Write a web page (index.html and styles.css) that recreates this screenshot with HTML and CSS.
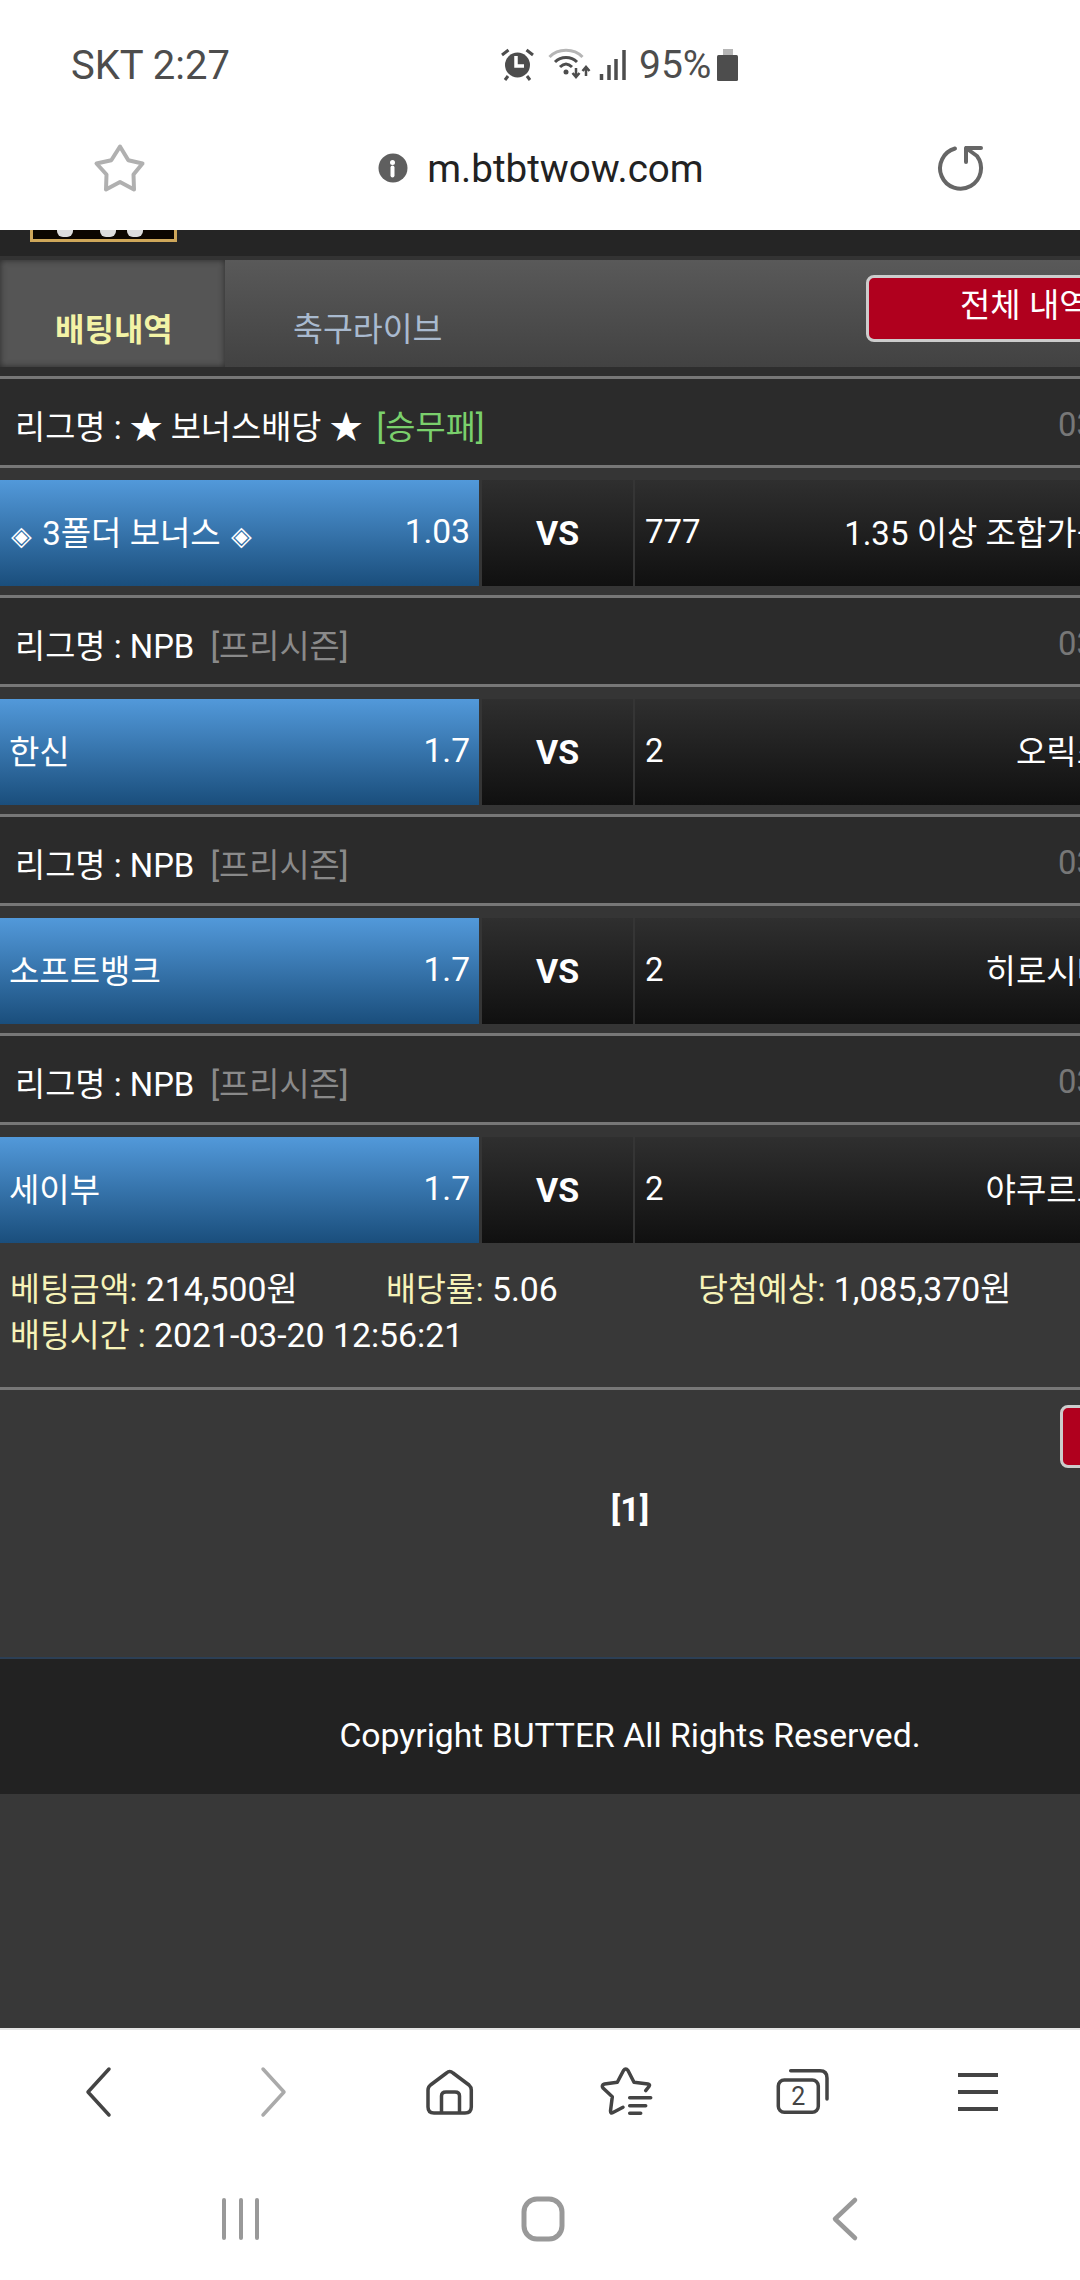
FILE: index.html
```html
<!DOCTYPE html>
<html>
<head lang="ko">
    <meta charset="UTF-8">
    <title>배팅내역</title>
    <link rel="stylesheet" href="styles.css">
</head>
<body>
<div class="phone">
    <div class="status">
        <span class="status-left">SKT 2:27</span>
        <div class="status-right">
            <svg class="ic-alarm" viewBox="0 0 34 32"><circle cx="16.500" cy="16" r="12.500" fill="#4d4d4d"/><path d="M1 6l6.500-5M32 6l-6.500-5M7 27l-3 4M26 27l3 4" stroke="#4d4d4d" stroke-width="3" fill="none"/><path d="M15 7v10h8" stroke="#fff" stroke-width="3.500" fill="none"/></svg>
            <svg class="ic-wifi" viewBox="0 0 43 32"><path d="M2.500 8C11 -1 27 -1 35.500 8" stroke="#b5b5b5" stroke-width="3" fill="none"/><path d="M8 13C14 7 24 7 30 13M13 18C17 14 21 14 25 18" stroke="#4d4d4d" stroke-width="3" fill="none"/><circle cx="19" cy="23" r="2.500" fill="#4d4d4d"/><path d="M29 19v9M25.500 24l3.500 4 3.500-4M39 27V18M35.500 22l3.500-4 3.500 4" stroke="#4d4d4d" stroke-width="2.500" fill="none"/></svg>
            <svg class="ic-signal" viewBox="0 0 27 30"><path d="M2.500 30v-6M10 30V15M17 30V9M25 30V0" stroke="#4d4d4d" stroke-width="3.500" fill="none"/></svg>
            <span class="status-pct">95%</span>
            <svg class="ic-batt" viewBox="0 0 21 32"><rect x="6" y="0" width="10" height="6" fill="#b5b5b5"/><rect x="0" y="6" width="21" height="26" rx="1.500" fill="#4d4d4d"/></svg>
        </div>
    </div>

    <div class="address">
        <svg class="ic-star" viewBox="0 0 51 49"><path d="M25 2.500l8.300 13.800 14.200 3.200-9 11 .5 15-14-7.500-14 7.500.5-15-10-11 14.800-3.200z" fill="none" stroke="#b0b0b0" stroke-width="4" stroke-linejoin="round"/></svg>
        <div class="url">
            <svg class="ic-info" viewBox="0 0 30 30"><circle cx="15" cy="15" r="14.500" fill="#5f5f5f"/><path d="M14.500 14.500v8" stroke="#fff" stroke-width="4" stroke-linecap="round"/><circle cx="14.500" cy="9.500" r="2.500" fill="#fff"/></svg>
            <span>m.btbtwow.com</span>
        </div>
        <svg class="ic-reload" viewBox="0 0 47 46"><path d="M19 3.500A20.500 20.500 0 1 0 41 11L30 3M30 3h15M30 3v14" fill="none" stroke="#666" stroke-width="4" stroke-linecap="round" stroke-linejoin="round"/></svg>
    </div>

    <div class="viewport">
        <div class="page">
            <div class="head">
                <div class="logo"><i></i><i></i><i></i></div>
            </div>
            <div class="tabs">
                <div class="tab on">배팅내역</div>
                <div class="tab">축구라이브</div>
                <a class="btn-all">전체 내역 삭제</a>
            </div>

            <div class="league">
                <div class="league-name">리그명 : ★ 보너스배당 ★ <span class="green">[승무패]</span></div>
                <div class="league-date">03-20 17:00</div>
            </div>
            <div class="match">
                <div class="home"><span><small>◈</small> 3폴더 보너스 <small>◈</small></span><span class="odds">1.03</span></div>
                <div class="vs">VS</div>
                <div class="away"><span>777</span><span>1.35 이상 조합가능</span></div>
            </div>

            <div class="league">
                <div class="league-name">리그명 : NPB <span class="gray">[프리시즌]</span></div>
                <div class="league-date">03-20 13:00</div>
            </div>
            <div class="match">
                <div class="home"><span>한신</span><span class="odds">1.7</span></div>
                <div class="vs">VS</div>
                <div class="away"><span>2</span><span>오릭스</span></div>
            </div>

            <div class="league">
                <div class="league-name">리그명 : NPB <span class="gray">[프리시즌]</span></div>
                <div class="league-date">03-20 13:00</div>
            </div>
            <div class="match">
                <div class="home"><span>소프트뱅크</span><span class="odds">1.7</span></div>
                <div class="vs">VS</div>
                <div class="away"><span>2</span><span>히로시마</span></div>
            </div>

            <div class="league">
                <div class="league-name">리그명 : NPB <span class="gray">[프리시즌]</span></div>
                <div class="league-date">03-20 13:00</div>
            </div>
            <div class="match last">
                <div class="home"><span>세이부</span><span class="odds">1.7</span></div>
                <div class="vs">VS</div>
                <div class="away"><span>2</span><span>야쿠르트</span></div>
            </div>

            <div class="info">
                <div><b>베팅금액:</b> 214,500원</div>
                <div><b>배당률:</b> 5.06</div>
                <div><b>당첨예상:</b> 1,085,370원</div>
                <div class="info-time"><b>배팅시간 :</b> 2021-03-20 12:56:21</div>
            </div>

            <div class="actions"><a class="btn-del">삭제</a></div>
            <div class="pager">[1]</div>

            <div class="footer">Copyright BUTTER All Rights Reserved.</div>
        </div>
    </div>

    <div class="toolbar">
        <div class="tool"><svg class="ic-nav" viewBox="0 0 50 50"><path d="M36 2L15 25l21 23" fill="none" stroke="#444" stroke-width="3.500" stroke-linecap="round" stroke-linejoin="round"/></svg></div>
        <div class="tool"><svg class="ic-nav" viewBox="0 0 50 50"><path d="M14 2l21 23-21 23" fill="none" stroke="#aaa" stroke-width="3.500" stroke-linecap="round" stroke-linejoin="round"/></svg></div>
        <div class="tool"><svg class="ic-nav" viewBox="0 0 50 50"><path d="M21.500 6Q24.700 3 28 6L44 18Q46.300 20 46.300 23V40Q46.300 46 40 46H9Q3 46 3 40V23Q3 20 5.500 18Z" fill="none" stroke="#444" stroke-width="3.500" stroke-linejoin="round"/><path d="M16.500 46V29Q16.500 25 21 25H30Q34.500 25 34.500 29V46" fill="none" stroke="#444" stroke-width="3.500"/></svg></div>
        <div class="tool"><svg class="ic-nav" viewBox="0 0 50 50"><path d="M44.700 23.700L48 19.500Q49.500 17.500 47 17L33 15.300 27 3.500Q24.700 .5 22.500 3.500L16.300 15.300 3.500 17Q0 18 2 21L11.300 29.700 9.500 44Q9.500 47 12 45.500L22 40.300" fill="none" stroke="#444" stroke-width="3.500" stroke-linecap="round" stroke-linejoin="round"/><path d="M28.700 30.700h21M28.700 38.700h16M28.700 46.300h11" stroke="#444" stroke-width="3.500" stroke-linecap="round"/></svg></div>
        <div class="tool"><svg class="ic-nav" viewBox="0 0 50 50"><path d="M13.700 3.700H43Q50 3.700 50 11V32" fill="none" stroke="#444" stroke-width="3.500" stroke-linecap="round"/><rect x="1.300" y="13" width="40" height="32.300" rx="6" fill="none" stroke="#444" stroke-width="3.500"/><text class="tab-count" x="21.300" y="38" text-anchor="middle">2</text></svg></div>
        <div class="tool"><svg class="ic-nav" viewBox="0 0 50 50"><path d="M5 8h40M5 25h40M5 42h40" stroke="#444" stroke-width="4"/></svg></div>
    </div>

    <div class="sysbar">
        <div class="sys"><svg class="ic-sys" viewBox="0 0 50 50"><path d="M8 6v38M25 6v38M41 6v38" stroke="#999" stroke-width="4" stroke-linecap="round"/></svg></div>
        <div class="sys"><svg class="ic-sys" viewBox="0 0 50 50"><rect x="6" y="5" width="38" height="40" rx="13" fill="none" stroke="#999" stroke-width="5"/></svg></div>
        <div class="sys"><svg class="ic-sys" viewBox="0 0 50 50"><path d="M35 6L15 25l20 19" fill="none" stroke="#999" stroke-width="4.500" stroke-linecap="round" stroke-linejoin="round"/></svg></div>
    </div>
</div>
</body>
</html>
```

FILE: styles.css
```css
*{
    padding: 0;
    margin: 0;
    box-sizing: border-box;
}
body{
    width: 1080px;
    height: 2280px;
    overflow: hidden;
    background: #fff;
    font-family: Roboto, "Noto Sans CJK KR", sans-serif;
}
svg{
    overflow: visible;
}
.phone{
    width: 1080px;
    height: 2280px;
    display: flex;
    flex-direction: column;
}

/* status bar */
.status{
    height: 90px;
    padding: 40px 0 0 71px;
    display: flex;
    align-items: center;
    color: #4d4d4d;
    font-size: 40px;
}
.status-left{
    width: 430px;
}
.status-right{
    display: flex;
    align-items: center;
}
.ic-alarm{
    width: 34px;
    height: 32px;
}
.ic-wifi{
    width: 43px;
    height: 32px;
    margin-left: 12px;
}
.ic-signal{
    width: 27px;
    height: 30px;
    margin-left: 9px;
}
.status-pct{
    margin-left: 13px;
    font-size: 39px;
    width: 78px;
}
.ic-batt{
    width: 21px;
    height: 32px;
}

/* address bar */
.address{
    height: 140px;
    padding: 16px 97px 0 95px;
    display: flex;
    align-items: center;
    justify-content: space-between;
}
.ic-star{
    width: 51px;
    height: 49px;
}
.ic-reload{
    width: 47px;
    height: 46px;
}
.url{
    display: flex;
    align-items: center;
    gap: 19px;
    font-size: 38.6px;
    color: #222;
}
.ic-info{
    width: 30px;
    height: 30px;
}

/* site */
.viewport{
    flex: 1;
    overflow: hidden;
    background: #383838;
}
.page{
    width: 1260px;
    color: #fff;
    font-size: 33.8px;
}
.head{
    height: 26px;
    padding-left: 30px;
    background: #252525;
}
.logo{
    width: 147px;
    height: 12px;
    position: relative;
    background: #0c0600;
    border: 3px solid #cfa75a;
    border-top: 0;
}
.logo i{
    position: absolute;
    top: 0;
    left: 24px;
    width: 16px;
    height: 7px;
    background: #ddd;
    border-radius: 0 0 6px 6px;
}
.logo i:nth-child(2){
    left: 67px;
}
.logo i:nth-child(3){
    left: 94px;
}
.tabs{
    height: 123px;
    padding-top: 4px;
    display: flex;
    background: linear-gradient(#333 4px, #595959 4px, #424242 111px, #2e2e2e 111px);
    border-bottom: 3px solid #777;
    position: relative;
}
.tab{
    height: 107px;
    padding: 47px 0 0 68px;
    width: 293px;
    color: #a9bacf;
    line-height: 46px;
    font-size: 32.5px;
}
.tab.on{
    width: 225px;
    padding-left: 55px;
    background: #555;
    box-shadow: inset 0 0 6px #2a2a2a;
    color: #f3f3a6;
    font-weight: bold;
    font-size: 32px;
}
.btn-all{
    position: absolute;
    left: 866px;
    top: 19px;
    width: 300px;
    height: 67px;
    padding-left: 91px;
    background: #b0001e;
    border: 3px solid #ccc;
    border-radius: 8px;
    line-height: 56px;
    font-size: 33px;
}
.league{
    height: 86px;
    padding: 5px 0 0 15px;
    display: flex;
    align-items: center;
    background: #2b2b2b;
    font-size: 32.8px;
}
.league-name{
    width: 1043px;
}
.league-date{
    color: #777;
}
.green{
    color: #7ad06c;
    margin-left: 6px;
}
.gray{
    color: #8a8a8a;
    margin-left: 8px;
}
.match{
    padding: 12px 0 9px;
    display: flex;
    background: #353535;
    border-top: 3px solid #777;
    border-bottom: 3px solid #777;
    box-sizing: content-box;
    height: 106px;
    font-size: 33px;
}
.match.last{
    border-bottom: 0;
    padding-bottom: 0;
}
.home{
    width: 479px;
    padding: 0 9px 4px 9px;
    display: flex;
    align-items: center;
    justify-content: space-between;
    background: linear-gradient(#5299da, #1a4e7c);
}
.odds{
    font-size: 33.5px;
}
.home small{
    font-size: 27px;
    margin: 0 2px;
}
.vs{
    width: 151px;
    margin: 0 2px 0 3px;
    display: flex;
    align-items: center;
    justify-content: center;
    background: linear-gradient(#2f2f2f, #101010);
    font-weight: bold;
    font-size: 34px;
}
.away{
    flex: 1;
    padding: 0 153px 4px 10px;
    display: flex;
    align-items: center;
    justify-content: space-between;
    background: linear-gradient(#2f2f2f, #101010);
}
.info{
    display: grid;
    grid-template-columns: 376px 312px 1fr;
    padding: 24px 0 28px 10px;
    line-height: 46px;
    border-bottom: 3px solid #777;
}
.info b{
    color: #f6f3b8;
    font-weight: normal;
    font-size: 32.5px;
}
.info-time{
    grid-column: 1 / 4;
}
.actions{
    display: flex;
    justify-content: flex-end;
    padding: 15px 100px 0 0;
}
.btn-del{
    width: 100px;
    height: 63px;
    padding-left: 30px;
    background: #b0001e;
    border: 3px solid #ccc;
    border-radius: 8px;
}
.pager{
    margin-top: 21px;
    height: 168px;
    line-height: 40px;
    text-align: center;
    font-weight: bold;
    font-size: 34px;
}
.footer{
    height: 137px;
    padding-top: 22px;
    line-height: 109px;
    text-align: center;
    background: #222;
    border-top: 2px solid #2c3f55;
    font-size: 33.7px;
}

/* browser toolbar */
.toolbar{
    height: 125px;
    padding: 0 14px 0 10px;
    display: flex;
    align-items: center;
    border-top: 2px solid #e5e5e5;
}
.tool{
    flex: 1;
    display: flex;
    justify-content: center;
}
.ic-nav{
    width: 50px;
    height: 50px;
}
.tab-count{
    font-size: 25px;
    fill: #444;
}
.sysbar{
    height: 127px;
    padding: 4px 84px 0 90px;
    display: flex;
    align-items: center;
}
.sys{
    flex: 1;
    display: flex;
    justify-content: center;
}
.ic-sys{
    width: 50px;
    height: 50px;
}
```
